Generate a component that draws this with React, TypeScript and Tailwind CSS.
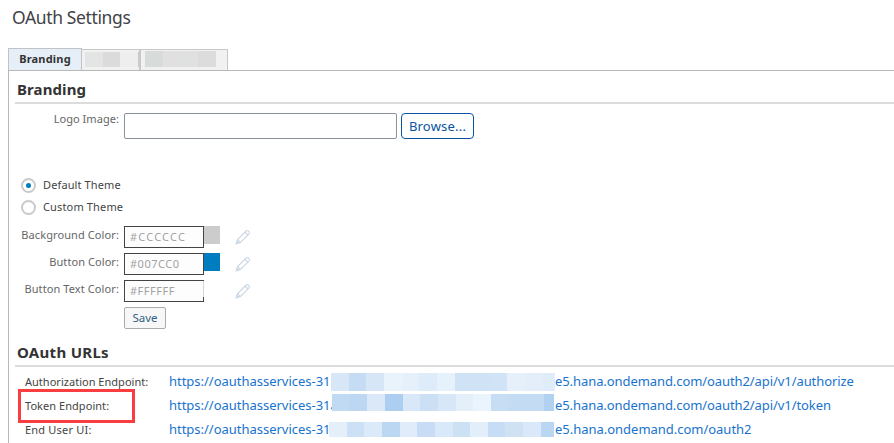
import React from "react";

const TAB_ONE = [
  ["w-[18px]", "bg-[#e2e5e3]"],
  ["w-[17px]", "bg-[#dadbda]"],
  ["w-[18px]", "bg-[#eeeeee]"],
  ["w-[2px]", "bg-[#cacaca]"],
];
const TAB_TWO = [
  ["w-[18px]", "bg-[#d7dbd9]"],
  ["w-[17px]", "bg-[#e0e0e0]"],
  ["w-[18px]", "bg-[#dee1e0]"],
  ["w-[18px]", "bg-[#dcdcdc]"],
];
const ROW_ONE = [
  ["w-[18px]", "bg-[#d8e7f7]"],
  ["w-[17px]", "bg-[#c5dcf4]"],
  ["w-[18px]", "bg-[#d6e6f6]"],
  ["w-[18px]", "bg-[#e9f3fc]"],
  ["w-[17px]", "bg-[#e5f0fb]"],
  ["w-[18px]", "bg-[#deebf9]"],
  ["w-[18px]", "bg-[#e5f1fb]"],
  ["w-[35px]", "bg-[#d0e3f6]"],
  ["w-[17px]", "bg-[#d1e4f7]"],
  ["w-[18px]", "bg-[#e6f0fb]"],
  ["w-[18px]", "bg-[#e3eefa]"],
  ["w-[12px]", "bg-[#dfedfa]"],
];
const ROW_TWO = [
  ["w-[18px]", "bg-[#c0daf3]"],
  ["w-[17px]", "bg-[#bdd7f2]"],
  ["w-[18px]", "bg-[#dae8f8]"],
  ["w-[18px]", "bg-[#accef0]"],
  ["w-[17px]", "bg-[#d9e8f8]"],
  ["w-[18px]", "bg-[#cbdff5]"],
  ["w-[18px]", "bg-[#d7e7f8]"],
  ["w-[17px]", "bg-[#e5effa]"],
  ["w-[18px]", "bg-[#eaf4fc]"],
  ["w-[17px]", "bg-[#c7ddf4]"],
  ["w-[36px]", "bg-[#c4dbf4]"],
  ["w-[10px]", "bg-[#b0d1f0]"],
];
const ROW_THREE = [
  ["w-[18px]", "bg-[#e5effa]"],
  ["w-[17px]", "bg-[#cce1f6]"],
  ["w-[18px]", "bg-[#daeaf9]"],
  ["w-[18px]", "bg-[#bcd7f2]"],
  ["w-[17px]", "bg-[#e0ecf9]"],
  ["w-[18px]", "bg-[#c8ddf5]"],
  ["w-[18px]", "bg-[#dae9f9]"],
  ["w-[17px]", "bg-[#cde1f5]"],
  ["w-[18px]", "bg-[#e2eefa]"],
  ["w-[17px]", "bg-[#c6ddf5]"],
  ["w-[18px]", "bg-[#cfe2f4]"],
  ["w-[18px]", "bg-[#d9e9f9]"],
  ["w-[13px]", "bg-[#bad6f3]"],
];

function Mosaic({ cells, className }: { cells: string[][]; className: string }) {
  return (
    <span className={`relative flex shrink-0 ${className}`}>
      {cells.map(([w, bg], i) => (
        <span key={i} className={`h-full shrink-0 ${w} ${bg}`} />
      ))}
    </span>
  );
}

function Pencil() {
  return (
    <svg width="16" height="16" viewBox="0 0 16 16" fill="none" stroke="#cbd8e4" strokeWidth="1.15">
      <path d="M1.5 14.5 L2.6 10.6 L11.2 2 Q12.3 1 13.4 2 L14 2.6 Q15 3.7 14 4.8 L5.4 13.4 Z" />
      <path d="M10 3.2 L12.8 6 M2.6 10.6 L5.4 13.4" />
      <path d="M1.2 14.8 L1.9 12.6 L3.4 14.1 Z" fill="#cbd8e4" />
    </svg>
  );
}

function ColorRow({ label, track, value, valueTrack, swatch, notch }: {
  label: string; track: string; value: string; valueTrack: string; swatch: string; notch?: boolean;
}) {
  return (
    <div className="flex h-[27px] items-start">
      <div className="w-[110px] shrink-0 whitespace-nowrap text-right text-[11px] leading-[18px] text-[#666]">
        <span className={track}>{label}</span>
      </div>
      <div className="relative ml-[5px] flex h-[22px] w-[80px] shrink-0 items-center border border-[#444] bg-[#fdfdfd] pl-[5px] pt-px text-[11px] text-[#a2a2a2]">
        <span className={valueTrack}>{value}</span>
        {notch && <span className="absolute -right-px top-0 h-[16px] w-px bg-[#d5d5d5]" />}
      </div>
      <div className={`h-[18px] w-[15.5px] shrink-0 ${swatch}`} />
      <div className="ml-[15px] mt-[3px]"><Pencil /></div>
    </div>
  );
}

function Radio({ label, track, checked }: { label: string; track: string; checked?: boolean }) {
  return (
    <div className="flex h-[22px] items-center">
      <span className="flex h-[15px] w-[15px] items-center justify-center rounded-full border-2 border-[#cacaca]">
        {checked && <span className="h-[5px] w-[5px] rounded-full bg-[#007cc0]" />}
      </span>
      <span className={`ml-[7px] text-[11px] leading-[18px] text-[#444] ${track}`}>{label}</span>
    </div>
  );
}

function UrlRow({ label, track, prefix, prefixBox, cells, mosaic, suffix, suffixTrack, suffixGap, boxed }: {
  label: string; track: string; prefix: string; prefixBox: string; cells: string[][]; mosaic: string;
  suffix: string; suffixTrack: string; suffixGap: string; boxed?: boolean;
}) {
  return (
    <div className="relative flex h-6 items-start whitespace-nowrap">
      {boxed && <span className="absolute left-[9px] top-[-5px] h-[34px] w-[117px] border-[3px] border-[#f83e41]" />}
      <span className="ml-4 w-[144px] shrink-0 text-[11px] leading-6 text-[#444]">
        <span className={track}>{label}</span>
      </span>
      <span className={`shrink-0 text-[13px] leading-[23px] tracking-[-0.02px] text-[#1873cf] ${prefixBox}`}>{prefix}</span>
      <Mosaic cells={cells} className={mosaic} />
      <span className={`text-[13px] leading-[23px] text-[#1873cf] ${suffixTrack} ${suffixGap}`}>{suffix}</span>
    </div>
  );
}

export default function App() {
  return (
    <div className="h-[443px] w-[894px] overflow-hidden bg-white font-['Noto_Sans','Open_Sans',sans-serif]">
      <h1 className="h-[48px] pl-3 pt-[4px] text-[17.5px] leading-[26px] tracking-[-0.37px] text-[#3f4347]">OAuth Settings</h1>
      <div className="ml-2 flex h-[22px] items-end">
        <div className="flex h-[22px] w-[74px] items-center justify-center border border-b-0 border-[#bfc3c7] bg-[#e6eef7] text-[11px] font-bold text-[#333]">
          <span className="tracking-[0.2px]">Branding</span>
        </div>
        <div className="flex h-[21px] w-[59px] border-r-2 border-t border-[#c8c8c8] bg-[#f1f1f1] pl-[3px] pt-[2px]">
          <Mosaic cells={TAB_ONE} className="h-[15px]" />
        </div>
        <div className="flex h-[21px] w-[87px] border-r border-t border-[#c8c8c8] bg-[#f1f1f1] pl-[4px] pt-px">
          <Mosaic cells={TAB_TWO} className="h-4" />
        </div>
      </div>
      <div className="ml-2 h-[373px] border-l border-t border-[#b8b8b8]">
        <div className="ml-[6px] flex h-[33px] border-b-2 border-[#dcdcdc] pl-[2px] pt-[7px]">
          <h2 className="text-[15px] font-bold leading-[22px] tracking-[0.1px] text-[#333]">Branding</h2>
        </div>
        <div className="flex pt-[9px]">
          <div className="w-[110px] shrink-0 text-right text-[11px] leading-[11px] tracking-[0.05px] text-[#666]">Logo Image:</div>
          <div className="ml-[5px] h-[26px] w-[273px] rounded-[2px] border border-[#89919a] bg-white" />
          <button className="ml-1 h-[26px] w-[73px] rounded-[4px] border border-[#0854a0] text-[13px] leading-[24px] tracking-[0.2px] text-[#0854a0]">Browse...</button>
        </div>
        <div className="ml-3 mt-[35px]">
          <Radio label="Default Theme" track="tracking-[0.12px]" checked />
          <Radio label="Custom Theme" track="tracking-[0.15px]" />
        </div>
        <div className="mt-[8px]">
          <ColorRow label="Background Color:" track="tracking-[0.1px]" value="#CCCCCC" valueTrack="tracking-[1.2px]" swatch="bg-[#cccccc]" />
          <ColorRow label="Button Color:" track="tracking-[0.07px]" value="#007CC0" valueTrack="tracking-[0.5px]" swatch="bg-[#007cc0]" />
          <ColorRow label="Button Text Color:" track="tracking-[0.1px]" value="#FFFFFF" valueTrack="tracking-[0.5px]" swatch="bg-white" notch />
        </div>
        <button className="ml-[115px] block h-[22px] w-[42px] rounded-[2px] border border-[#ababab] bg-[#f7f7f7] text-[11.5px] leading-[20px] text-[#346187]">Save</button>
        <div className="ml-[6px] mt-[12px] flex h-[26px] border-b-2 border-[#dcdcdc] pl-[2px]">
          <h2 className="text-[15px] font-bold leading-[22px] tracking-[0.3px] text-[#333]">OAuth URLs</h2>
        </div>
        <div className="mt-[3px]">
          <UrlRow label="Authorization Endpoint:" track="tracking-[0.02px]" prefix="https://oauthasservices-31" prefixBox="w-[162px]" cells={ROW_ONE} mosaic="mt-[3px] h-[18px] w-[224px]" suffix="e5.hana.ondemand.com/oauth2/api/v1/authorize" suffixTrack="tracking-[-0.08px]" suffixGap="" />
          <UrlRow label="Token Endpoint:" track="tracking-[0.05px]" prefix="https://oauthasservices-31a" prefixBox="w-[163px]" cells={ROW_TWO} mosaic="h-[17px] w-[222px]" suffix="e5.hana.ondemand.com/oauth2/api/v1/token" suffixTrack="tracking-[-0.08px]" suffixGap="ml-px" boxed />
          <UrlRow label="End User UI:" track="tracking-[0.2px]" prefix="https://oauthasservices-31" prefixBox="w-[160px]" cells={ROW_THREE} mosaic="mt-[4px] h-[15px] w-[225px]" suffix="e5.hana.ondemand.com/oauth2" suffixTrack="tracking-[-0.02px]" suffixGap="ml-px" />
        </div>
      </div>
    </div>
  );
}
